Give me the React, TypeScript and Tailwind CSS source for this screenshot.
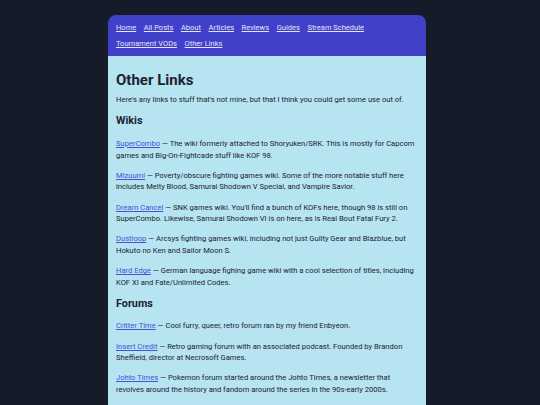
import React from "react";

const navLinks = ["Home", "All Posts", "About", "Articles", "Reviews", "Guides", "Stream Schedule", "Tournament VODs", "Other Links"];

const wikis: [string, string][] = [
  ["SuperCombo", "The wiki formerly attached to Shoryuken/SRK. This is mostly for Capcom games and Big-On-Fightcade stuff like KOF 98."],
  ["Mizuumi", "Poverty/obscure fighting games wiki. Some of the more notable stuff here includes Melty Blood, Samurai Shodown V Special, and Vampire Savior."],
  ["Dream Cancel", "SNK games wiki. You'll find a bunch of KOFs here, though 98 is still on SuperCombo. Likewise, Samurai Shodown VI is on here, as is Real Bout Fatal Fury 2."],
  ["Dustloop", "Arcsys fighting games wiki, including not just Guilty Gear and Blazblue, but Hokuto no Ken and Sailor Moon S."],
  ["Hard Edge", "German language fighing game wiki with a cool selection of titles, including KOF XI and Fate/Unlimited Codes."],
];

const forums: [string, string][] = [
  ["Critter Time", "Cool furry, queer, retro forum ran by my friend Enbyeon."],
  ["Insert Credit", "Retro gaming forum with an associated podcast. Founded by Brandon Sheffield, director at Necrosoft Games."],
  ["Johto Times", "Pokemon forum started around the Johto Times, a newsletter that revolves around the history and fandom around the series in the 90s-early 2000s."],
];

function Entry({ name, text }: { name: string; text: string }) {
  return (
    <p className="mb-[8.3px] text-[7.6px] leading-[11.8px]">
      <a href="#" className="text-[#4352d6] underline">{name}</a> — {text}
    </p>
  );
}

export default function App() {
  return (
    <div className="min-h-screen bg-[#151b28] pt-[15px]" style={{ fontFamily: "Roboto, 'Noto Sans', sans-serif" }}>
      <div className="ml-[108px] w-[318px] overflow-hidden rounded-t-[8px]">
        <nav className="flex flex-wrap gap-x-[7.6px] gap-y-[4.8px] bg-[#4040c8] px-[8px] py-[6.5px]">
          {navLinks.map((l) => (
            <a key={l} href="#" className="text-[7.5px] leading-[11.6px] text-[#e4e4ff] underline">
              {l}
            </a>
          ))}
        </nav>
        <main className="bg-[#b6e4f1] px-[8px] pt-[16px] pb-[10px] text-[#1c2230]">
          <h1 className="mb-[6.5px] text-[15px] font-bold leading-[16px]">Other Links</h1>
          <p className="mb-[8.2px] text-[7.6px] leading-[11.8px]">
            Here's any links to stuff that's not mine, but that I think you could get some use out of.
          </p>
          <h2 className="mb-[10px] text-[10.8px] font-bold leading-[13.25px]">Wikis</h2>
          {wikis.map(([n, t]) => (
            <Entry key={n} name={n} text={t} />
          ))}
          <h2 className="mb-[10px] mt-[1.2px] text-[10.8px] font-bold leading-[13.25px]">Forums</h2>
          {forums.map(([n, t]) => (
            <Entry key={n} name={n} text={t} />
          ))}
        </main>
      </div>
    </div>
  );
}
